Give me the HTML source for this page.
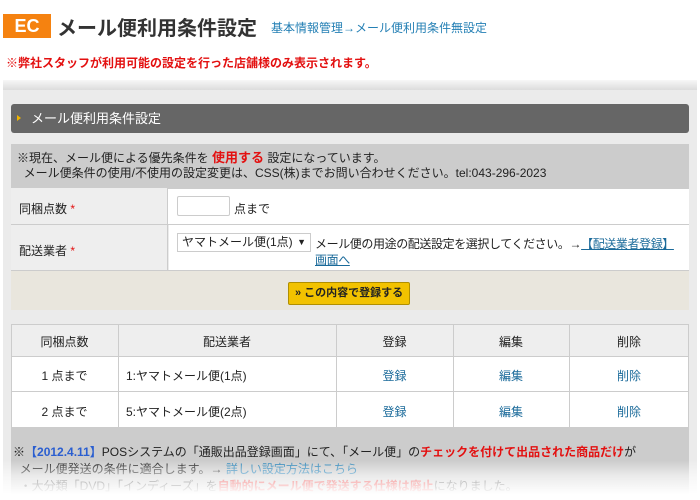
<!DOCTYPE html>
<html><head><meta charset="utf-8"><style>
*{margin:0;padding:0;box-sizing:border-box}
body{width:700px;height:500px;overflow:hidden;background:#fff;font-family:"Liberation Sans","Noto Sans CJK JP",sans-serif;font-size:12px;color:#222;position:relative}
.abs{position:absolute}
a{color:#1a6a9a}
</style></head><body>
<div class="abs" style="left:3px;top:14px;width:48px;height:24px;background:#f58210;color:#fff;font-weight:bold;font-size:18px;text-align:center;line-height:24px">EC</div>
<div class="abs" style="left:57px;top:12px;font-size:20px;font-weight:bold;color:#333">メール便利用条件設定</div>
<div class="abs" style="left:271px;top:19px;font-size:12px;color:#2580b5">基本情報管理→メール便利用条件無設定</div>
<div class="abs" style="left:6px;top:54px;font-size:12px;color:#e31010;font-weight:bold">※弊社スタッフが利用可能の設定を行った店舗様のみ表示されます。</div>
<div class="abs" style="left:3px;top:80px;width:694px;height:10px;background:linear-gradient(#f7f7f7,#dcdcdc)"></div>
<div class="abs" style="left:3px;top:90px;width:694px;height:410px;background:#ebebeb"></div>
<div class="abs" style="left:11px;top:104px;width:678px;height:29px;background:#666;border-radius:3px;color:#fff;font-size:13px;line-height:29px;padding-left:20px">メール便利用条件設定</div>
<div class="abs" style="left:17px;top:115px;width:0;height:0;border-left:4px solid #f0b400;border-top:3px solid transparent;border-bottom:3px solid transparent"></div>
<div class="abs" style="left:11px;top:144px;width:678px;height:44px;background:#ccc;padding:6px 0 0 6px;line-height:15px">※現在、メール便による優先条件を <b style="color:#e31010;font-size:13px">使用する</b> 設定になっています。<br>&nbsp;&nbsp;メール便条件の使用/不使用の設定変更は、CSS(株)までお問い合わせください。tel:043-296-2023</div>
<div class="abs" style="left:11px;top:188px;width:678px;height:36px;background:#fff;border-top:1px solid #ccc"></div>
<div class="abs" style="left:11px;top:188px;width:157px;height:82px;background:#eee;border-right:1px solid #ccc"></div>
<div class="abs" style="left:11px;top:224px;width:678px;border-top:1px solid #ccc"></div>
<div class="abs" style="left:169px;top:225px;width:520px;height:45px;background:#fff"></div>
<div class="abs" style="left:19px;top:200px">同梱点数 <span style="color:#e31010">*</span></div>
<div class="abs" style="left:19px;top:242px">配送業者 <span style="color:#e31010">*</span></div>
<div class="abs" style="left:177px;top:196px;width:53px;height:20px;border:1px solid #ccc;border-radius:2px;background:#fff"></div>
<div class="abs" style="left:234px;top:200px">点まで</div>
<div class="abs" style="left:177px;top:233px;width:134px;height:19px;border:1px solid #ccc;background:#fff;padding-left:4px;line-height:17px">ヤマトメール便(1点)<span style="position:absolute;right:4px;font-size:9px">▼</span></div>
<div class="abs" style="left:315px;top:236px;width:360px;line-height:16px;letter-spacing:-0.4px;line-break:anywhere">メール便の用途の配送設定を選択してください。→<a href="#">【配送業者登録】画面へ</a></div>
<div class="abs" style="left:11px;top:270px;width:678px;height:40px;background:#e9e6dd;border-top:1px solid #ccc"></div>
<div class="abs" style="left:288px;top:282px;width:122px;height:23px;background:#f2c200;border:1px solid #b08f00;border-radius:2px;font-size:11px;font-weight:bold;line-height:21px;padding-left:6px;color:#222">» この内容で登録する</div>
<div class="abs" style="left:11px;top:324px;width:678px;height:104px;background:#fff;border:1px solid #ccc"></div>
<div class="abs" style="left:12px;top:325px;width:676px;height:31px;background:#eee"></div>
<div class="abs" style="left:11px;top:356px;width:678px;border-top:1px solid #ccc"></div>
<div class="abs" style="left:11px;top:391px;width:678px;border-top:1px solid #ccc"></div>
<div class="abs" style="left:118px;top:324px;height:104px;border-left:1px solid #ccc"></div>
<div class="abs" style="left:336px;top:324px;height:104px;border-left:1px solid #ccc"></div>
<div class="abs" style="left:453px;top:324px;height:104px;border-left:1px solid #ccc"></div>
<div class="abs" style="left:569px;top:324px;height:104px;border-left:1px solid #ccc"></div>
<div class="abs" style="left:11px;top:333px;width:107px;text-align:center">同梱点数</div>
<div class="abs" style="left:118px;top:333px;width:218px;text-align:center">配送業者</div>
<div class="abs" style="left:336px;top:333px;width:117px;text-align:center">登録</div>
<div class="abs" style="left:453px;top:333px;width:116px;text-align:center">編集</div>
<div class="abs" style="left:569px;top:333px;width:120px;text-align:center">削除</div>
<div class="abs" style="left:11px;top:367px;width:107px;text-align:center">1 点まで</div>
<div class="abs" style="left:126px;top:367px">1:ヤマトメール便(1点)</div>
<div class="abs" style="left:336px;top:367px;width:117px;text-align:center;color:#1a6a9a">登録</div>
<div class="abs" style="left:453px;top:367px;width:116px;text-align:center;color:#1a6a9a">編集</div>
<div class="abs" style="left:569px;top:367px;width:120px;text-align:center;color:#1a6a9a">削除</div>
<div class="abs" style="left:11px;top:403px;width:107px;text-align:center">2 点まで</div>
<div class="abs" style="left:126px;top:403px">5:ヤマトメール便(2点)</div>
<div class="abs" style="left:336px;top:403px;width:117px;text-align:center;color:#1a6a9a">登録</div>
<div class="abs" style="left:453px;top:403px;width:116px;text-align:center;color:#1a6a9a">編集</div>
<div class="abs" style="left:569px;top:403px;width:120px;text-align:center;color:#1a6a9a">削除</div>
<div class="abs" style="left:11px;top:428px;width:678px;height:72px;background:#ccc"></div>
<div class="abs" style="left:13px;top:444px;line-height:17px;width:680px">※<b style="color:#2a5ed0">【2012.4.11】</b>POSシステムの「通販出品登録画面」にて、「メール便」の<b style="color:#e31010">チェックを付けて出品された商品だけ</b>が<br>&nbsp;&nbsp;メール便発送の条件に適合します。→ <span style="color:#2580b5">詳しい設定方法はこちら</span><br>&nbsp;&nbsp;・大分類「DVD」「インディーズ」を<b style="color:#e31010">自動的にメール便で発送する仕様は廃止</b>になりました。</div>
<div class="abs" style="left:0;top:460px;width:700px;height:40px;background:linear-gradient(rgba(255,255,255,0),rgba(255,255,255,0.6) 40%,#fff 85%)"></div>
</body></html>
